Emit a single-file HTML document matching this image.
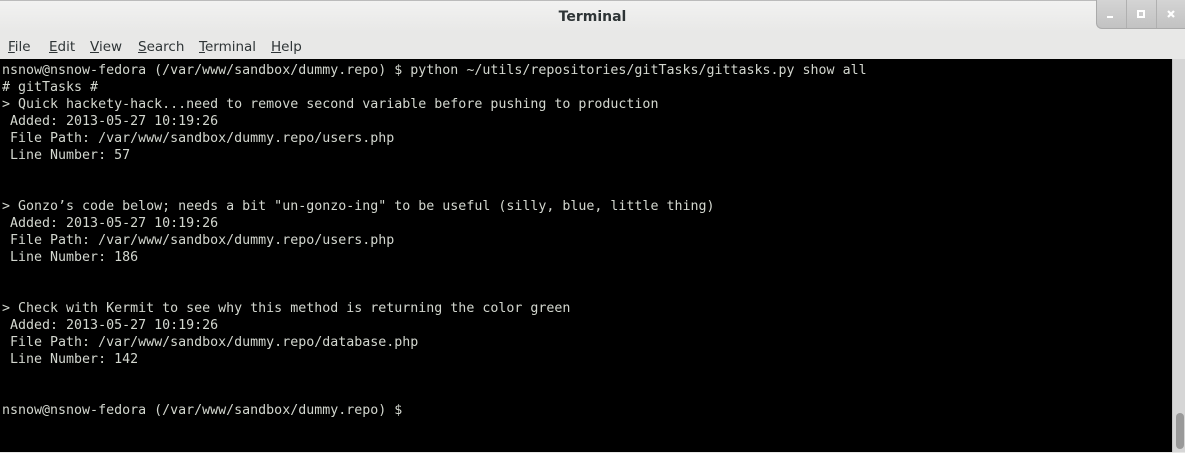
<!DOCTYPE html>
<html><head><style>
html,body{margin:0;padding:0;width:1185px;height:453px;overflow:hidden;background:#e8e8e7;font-family:"DejaVu Sans","Liberation Sans",sans-serif}
#title{position:absolute;left:0;top:0;width:1185px;height:32px;background:linear-gradient(#f2f2f1,#e8e8e7);border-top:1px solid #bbb;box-sizing:border-box;text-align:center;font-weight:bold;font-size:14px;line-height:33px;color:#2e3436}
#btns{position:absolute;left:1096px;top:0;width:89px;height:28px;background:linear-gradient(#d4d4d4,#c2c2c2);border-left:1px solid #aaa;border-bottom:1px solid #aaa;border-radius:0 0 0 6px;display:flex}
#btns div{flex:1;border-right:1px solid #b0b0b0;position:relative}
#menu{position:absolute;left:0;top:33px;height:27px;width:1185px;font-size:13.5px;color:#2e3436}
#menu span{position:absolute;top:6px}
#menu u{text-decoration:underline}
#term{position:absolute;left:0;top:59px;width:1172px;height:393px;background:#000}
#sb{position:absolute;left:1172px;top:59px;width:13px;height:393px;background:#d6d6d6;border-left:1px solid #c4c4c4;box-sizing:border-box}
#thumb{position:absolute;left:3px;top:354px;width:8px;height:36px;background:#999;border-radius:4px}
pre{margin:0;position:absolute;left:2px;top:3px;font-family:"DejaVu Sans Mono","Liberation Mono",monospace;font-size:13.3px;line-height:17px;color:#d3d7cf}
</style></head><body>
<div id="title">Terminal</div>
<div id="btns">
<div><span style="position:absolute;left:10px;top:16px;width:6px;height:2px;background:#fff"></span></div>
<div><span style="position:absolute;left:10px;top:10px;width:4px;height:4px;border:2px solid #fff"></span></div>
<div style="border-right:none"><svg style="position:absolute;left:9px;top:9px" width="10" height="10"><path d="M2 2L8 8M8 2L2 8" stroke="#fff" stroke-width="2.2"/></svg></div>
</div>
<div id="menu">
<span style="left:8px"><u>F</u>ile</span>
<span style="left:49px"><u>E</u>dit</span>
<span style="left:90px"><u>V</u>iew</span>
<span style="left:138px"><u>S</u>earch</span>
<span style="left:199px"><u>T</u>erminal</span>
<span style="left:271px"><u>H</u>elp</span>
</div>
<div id="term"><pre>nsnow@nsnow-fedora (/var/www/sandbox/dummy.repo) $ python ~/utils/repositories/gitTasks/gittasks.py show all
# gitTasks #
&gt; Quick hackety-hack...need to remove second variable before pushing to production
 Added: 2013-05-27 10:19:26
 File Path: /var/www/sandbox/dummy.repo/users.php
 Line Number: 57


&gt; Gonzo’s code below; needs a bit "un-gonzo-ing" to be useful (silly, blue, little thing)
 Added: 2013-05-27 10:19:26
 File Path: /var/www/sandbox/dummy.repo/users.php
 Line Number: 186


&gt; Check with Kermit to see why this method is returning the color green
 Added: 2013-05-27 10:19:26
 File Path: /var/www/sandbox/dummy.repo/database.php
 Line Number: 142


nsnow@nsnow-fedora (/var/www/sandbox/dummy.repo) $</pre></div>
<div id="sb"><div id="thumb"></div></div>
</body></html>
